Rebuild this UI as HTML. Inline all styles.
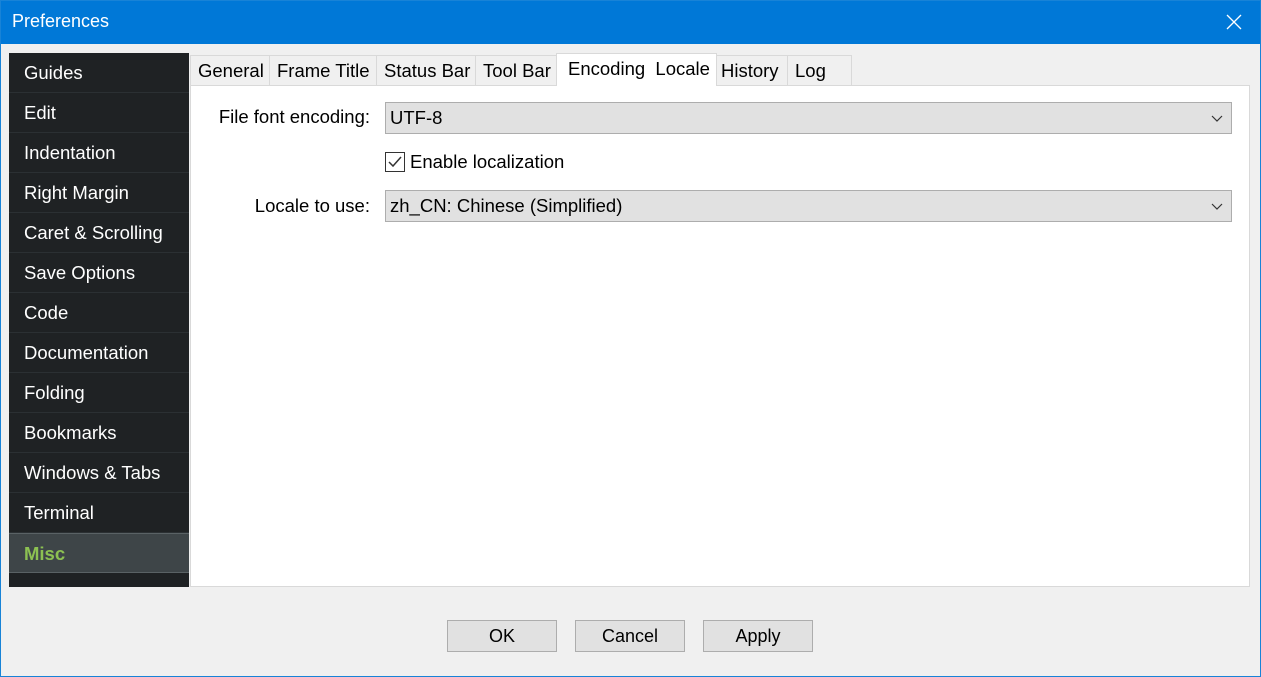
<!DOCTYPE html><html><head><style>
*{margin:0;padding:0;box-sizing:border-box}
body{width:1261px;height:677px;background:#f0f0f0;font-family:"Liberation Sans",sans-serif;font-size:18px;color:#000;position:relative;overflow:hidden}
.a{position:absolute}
#frame{left:0;top:0;width:1261px;height:677px;border:1px solid #1883d7;z-index:5;pointer-events:none}
#title{left:0;top:0;width:1261px;height:44px;background:#0078d7;color:#fff;font-size:18px}
#side{left:9px;top:53px;width:180px;height:534px;background:#1f2224}
.it{position:absolute;left:0;width:180px;height:40px;line-height:40px;padding-left:15px;color:#fff;border-bottom:1px solid #2b3033;font-size:18.5px}
.tab{position:absolute;top:55px;height:30px;line-height:30px;background:#f0f0f0;border:1px solid #d9d9d9;border-bottom:none;padding-left:7px;font-size:18.5px}
#panel{left:190px;top:85px;width:1060px;height:502px;background:#fff;border:1px solid #d9d9d9}
.cb{position:absolute;left:385px;width:847px;height:32px;background:#e1e1e1;border:1px solid #adadad;line-height:30px;padding-left:4px;font-size:18.5px}
.btn{position:absolute;top:620px;width:110px;height:32px;background:#e1e1e1;border:1px solid #adadad;text-align:center;line-height:30px}
.lbl{position:absolute;text-align:right;width:200px;font-size:18.5px}
</style></head><body>
<div id="frame" class="a"></div>
<div id="title" class="a"><span class="a" style="left:12px;top:11px">Preferences</span>
<svg class="a" style="left:1226px;top:14px" width="16" height="16"><path d="M1 1L15 15M15 1L1 15" stroke="#fff" stroke-width="1.3"/></svg></div>
<div id="side" class="a">
<div class="it" style="top:0">Guides</div><div class="it" style="top:40px">Edit</div><div class="it" style="top:80px">Indentation</div><div class="it" style="top:120px">Right Margin</div><div class="it" style="top:160px">Caret &amp; Scrolling</div><div class="it" style="top:200px">Save Options</div><div class="it" style="top:240px">Code</div><div class="it" style="top:280px">Documentation</div><div class="it" style="top:320px">Folding</div><div class="it" style="top:360px">Bookmarks</div><div class="it" style="top:400px">Windows &amp; Tabs</div><div class="it" style="top:440px">Terminal</div>
<div class="it" style="top:480px;background:#3e4548;border-top:1px solid #5a6265;border-bottom:1px solid #5a6265;color:#8cc152;font-weight:bold">Misc</div>
</div>
<div id="panel" class="a"></div>
<div class="tab" style="left:190px;width:80px">General</div>
<div class="tab" style="left:269px;width:108px">Frame Title</div>
<div class="tab" style="left:376px;width:100px">Status Bar</div>
<div class="tab" style="left:475px;width:82px">Tool Bar</div>
<div class="tab" style="left:556px;top:53px;height:33px;width:161px;background:#fff;line-height:30px;padding-left:11px;border-bottom:none">Encoding&nbsp; Locale</div>
<div class="tab" style="left:716px;width:72px;padding-left:4px">History</div>
<div class="tab" style="left:787px;width:65px">Log</div>
<div class="lbl" style="left:170px;top:106px">File font encoding:</div>
<div class="cb" style="top:102px">UTF-8<svg class="a" style="right:8px;top:12px" width="12" height="8"><path d="M1 1L6 6L11 1" stroke="#333" fill="none" stroke-width="1.2"/></svg></div>
<div class="a" style="left:385px;top:152px;width:20px;height:20px;border:1px solid #333;background:#fff"><svg width="18" height="18"><path d="M3 9L7 13L15 4" stroke="#333" fill="none" stroke-width="1.5"/></svg></div>
<div class="a" style="left:410px;top:151px;font-size:18.5px">Enable localization</div>
<div class="lbl" style="left:170px;top:195px">Locale to use:</div>
<div class="cb" style="top:190px">zh_CN: Chinese (Simplified)<svg class="a" style="right:8px;top:12px" width="12" height="8"><path d="M1 1L6 6L11 1" stroke="#333" fill="none" stroke-width="1.2"/></svg></div>
<div class="btn" style="left:447px">OK</div>
<div class="btn" style="left:575px">Cancel</div>
<div class="btn" style="left:703px">Apply</div>
</body></html>
